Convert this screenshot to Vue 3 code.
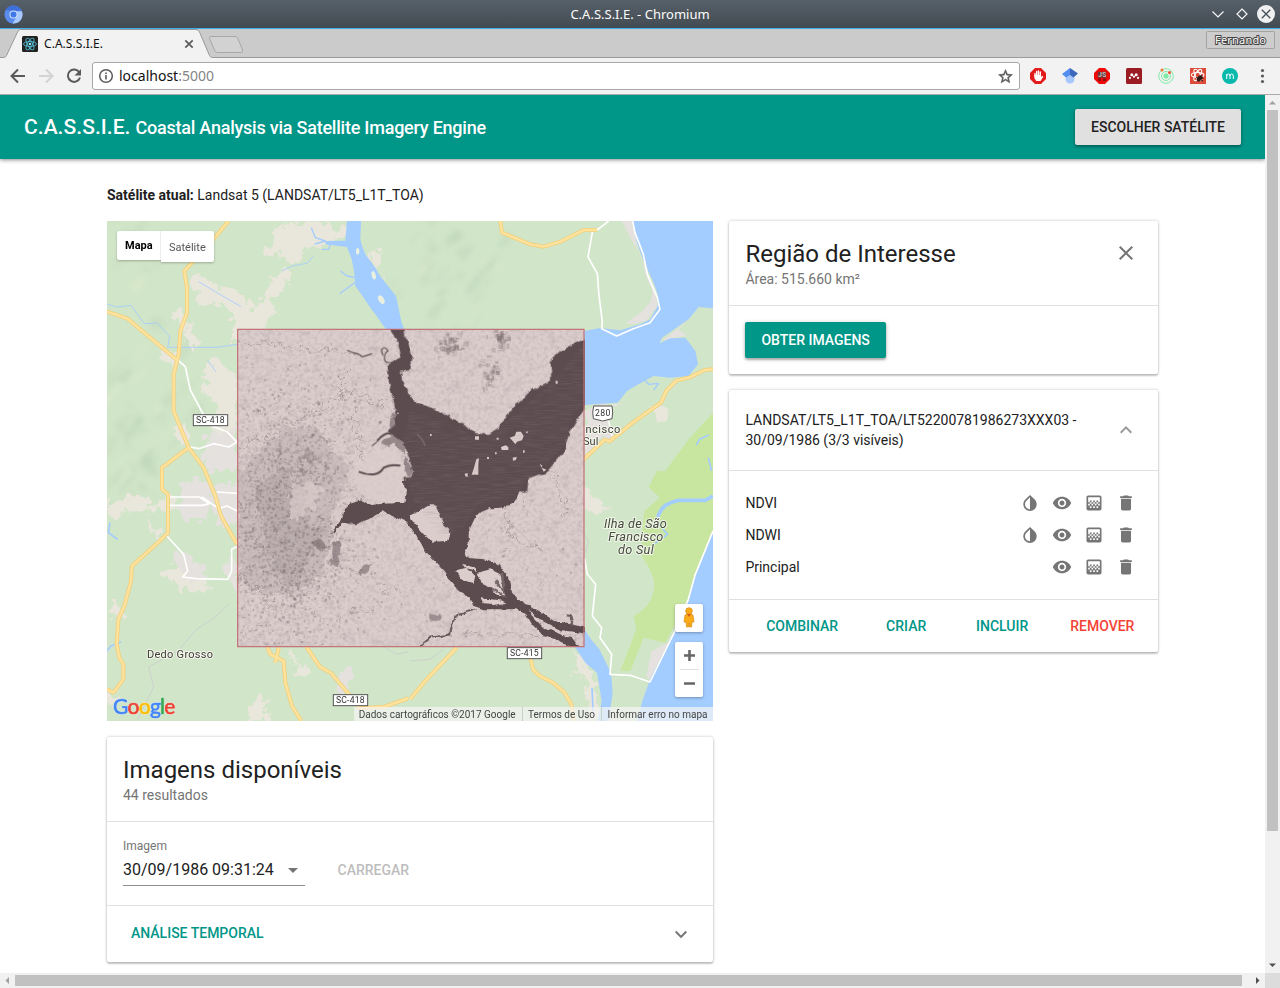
<script setup>
const layers = [
  { name: 'NDVI', invert: true },
  { name: 'NDWI', invert: true },
  { name: 'Principal', invert: false },
]

// Small deterministic generator, so that the terrain grain is always the same.
let seed = 4211
const rnd = () => {
  seed = (seed * 1664525 + 1013904223) % 4294967296
  return seed / 4294967296
}
const scatter = (n, cx, cy, sx, sy, max) =>
  Array.from({ length: n }, () => ({
    x: cx + (rnd() + rnd() + rnd() - 1.5) * sx,
    y: cy + (rnd() + rnd() + rnd() - 1.5) * sy,
    w: 2 + rnd() * max,
    h: 2 + rnd() * max,
    o: 0.1 + rnd() * 0.26,
  }))
const city = [
  ...scatter(1500, 520, 930, 200, 370, 7),
  ...scatter(500, 540, 900, 230, 280, 8),
  ...scatter(280, 600, 560, 260, 180, 7),
  ...scatter(330, 610, 1080, 260, 170, 7),
  ...scatter(130, 590, 720, 120, 100, 12),
  ...scatter(130, 1180, 1060, 280, 260, 6),
  ...scatter(70, 1025, 370, 38, 38, 16),
  ...scatter(45, 1175, 350, 26, 30, 15),
  ...scatter(55, 1145, 460, 26, 48, 14),
]
const hills = [
  ...scatter(75, 90, 590, 150, 260, 70),
  ...scatter(55, 1030, 170, 170, 180, 56),
  ...scatter(24, 70, 70, 130, 120, 70),
]
</script>

<template>
  <div class="window">
    <div class="titlebar">
      <svg class="app-logo" viewBox="0 0 20 20"><circle cx="10" cy="10" r="9.5" fill="#5b8def"/><path d="M1.5 5.5A9.5 9.5 0 0 1 18.5 6L10 6z" fill="#3f6fd8"/><path d="M18.8 6.5A9.5 9.5 0 0 1 9 19.5L13.7 11.5 13 6.5z" fill="#a9c8fb"/><circle cx="10" cy="10" r="4.3" fill="#cfe0fd"/><circle cx="10" cy="10" r="3.2" fill="#3f78e8"/></svg>
      <span>C.A.S.S.I.E. - Chromium</span>
      <svg class="win-buttons" viewBox="0 0 70 20" fill="none" stroke="#f4f6f7" stroke-width="1.2"><path d="M4.500 7.500l5.500 5.500L15.500 7.500M34 5l5 5-5 5-5-5z"/><circle cx="58" cy="10" r="9" fill="#eff0f1" stroke="none"/><path d="M53.800 5.800l8.500 8.500M62.300 5.800l-8.500 8.500" stroke="#475057" stroke-width="1.300"/></svg>
    </div>
    <div class="tabs">
      <svg viewBox="0 0 1280 30" width="1280" height="30">
        <path d="M0 28.500H3.500Q5.500 28.500 6.500 26.500L17.500 3Q18.500.5 20.500.5H196Q198.500.5 199.500 3L209.500 26.500Q210.500 28.500 212.500 28.500H1280V30H0z" fill="#f2f2f2" stroke="#999"/>
        <path d="M211 7.500H235Q237 7.500 237.700 9L242.600 21Q243.300 23.500 241 23.500H217.500Q215.500 23.500 214.700 21.500L209.500 9.500Q209 7.500 211 7.500z" fill="#d2d2d2" stroke="#a7a7a7"/>
        <rect x="22" y="7" width="16" height="16" rx="1.500" fill="#222"/>
        <g fill="none" stroke="#53b9d1" stroke-width=".9"><ellipse cx="30" cy="15" rx="6.500" ry="2.500"/><ellipse cx="30" cy="15" rx="6.500" ry="2.500" transform="rotate(60 30 15)"/><ellipse cx="30" cy="15" rx="6.500" ry="2.500" transform="rotate(120 30 15)"/></g><circle cx="30" cy="15" r="1.300" fill="#8fe3f5"/>
        <text x="44" y="19" class="tab-text" textLength="59">C.A.S.S.I.E.</text>
        <path d="M185.300 11.300l7.400 7.400M192.700 11.300l-7.400 7.400" stroke="#5a5a5a" stroke-width="1.700"/>
        <rect x="1206.500" y="2.500" width="68" height="17" rx="1" fill="#cdcdcd" stroke="#a3a3a3"/>
        <text x="1215" y="15" class="user-text" textLength="51">Fernando</text>
      </svg>
    </div>
    <div class="toolbar">
      <svg class="nav" viewBox="0 0 92 36"><g fill="none" stroke-width="2"><path d="M25 18H12M18 11.500L11.500 18l6.500 6.500" stroke="#5a5a5a"/><path d="M39 18H52M46 11.500l6.500 6.500-6.500 6.500" stroke="#d2d2d2"/><path d="M79.300 14.300A6.200 6.200 0 1 0 80 19.500" stroke="#5a5a5a"/></g><path d="M81 11v6.500h-6.500z" fill="#5a5a5a"/></svg>
      <div class="omnibox">
        <svg viewBox="0 0 16 16" width="16" height="16"><circle cx="8" cy="8" r="6.300" fill="none" stroke="#5a5a5a" stroke-width="1.500"/><path d="M7.200 7h1.600v4.500H7.200zM7.200 4.500h1.600V6H7.200z" fill="#5a5a5a"/></svg>
        <span class="url">localhost<em>:5000</em></span>
        <svg class="star" viewBox="0 0 24 24" width="17" height="17"><path fill="#5a5a5a" stroke="#5a5a5a" stroke-width=".6" d="M22 9.240l-7.190-.62L12 2 9.190 8.630 2 9.240l5.460 4.730L5.820 21 12 17.270 18.180 21l-1.630-7.030L22 9.240zM12 15.400l-3.760 2.270 1-4.280-3.320-2.880 4.380-.38L12 6.100l1.710 4.040 4.380.38-3.320 2.880 1 4.280L12 15.400z"/></svg>
      </div>
      <div class="extensions">
        <svg viewBox="0 0 16 16"><path d="M5 0h6l5 5v6l-5 5H5l-5-5V5z" fill="#e31b1b"/><path d="M5 8V5.500M6.700 7.500V3.500M8.500 7V3M10.300 8V4" stroke="#fff" stroke-width="1.400" stroke-linecap="round"/><path d="M4.300 7h6.800v2l1.200-1.200 1 .9-2.800 4.300H6.200L4.300 10z" fill="#fff"/></svg>
        <svg viewBox="0 0 16 16"><circle cx="8" cy="11" r="4.500" fill="#a5c7fb"/><path d="M8 0L0 6l4 3.500L8 7z" fill="#538df0"/><path d="M8 0l8 5.500-4.500 4L8 7z" fill="#3c67bd"/></svg>
        <svg viewBox="0 0 16 16"><path d="M5 0h6l5 5v6l-5 5H5l-5-5V5z" fill="#f00808"/><rect x="3.800" y="3.800" width="8.400" height="6" fill="#6a3232"/><rect x="4" y="10.500" width="3" height="2.500" fill="#8c1111"/><rect x="9" y="10.500" width="3" height="2.500" fill="#8c1111"/><text x="4" y="9.300" font-size="7" font-weight="700" fill="#c9baba">JS</text></svg>
        <svg viewBox="0 0 16 16"><rect width="16" height="16" rx="1.500" fill="#9b1c22"/><g fill="#fff"><circle cx="5.800" cy="6.800" r="1.500"/><circle cx="10.200" cy="6.800" r="1.500"/><circle cx="8" cy="8.600" r="1.200"/><circle cx="3.900" cy="9.900" r="1.100"/><circle cx="12.100" cy="9.900" r="1.100"/></g></svg>
        <svg viewBox="0 0 16 16" fill="none" stroke="#7eeaa5"><circle cx="8" cy="8" r="7.300"/><circle cx="8" cy="8" r="4.500"/><circle cx="8" cy="8" r="2.200" fill="#7eeaa5"/><circle cx="4" cy="2" r="1.500" fill="#f4762f" stroke="none"/><circle cx="11.500" cy="4.500" r="1.500" fill="#f04d32" stroke="none"/></svg>
        <svg viewBox="0 0 16 16"><rect width="16" height="16" fill="#dd4b39"/><g fill="none" stroke="#fff" stroke-width="1.100"><ellipse cx="7.700" cy="7" rx="6.300" ry="2.500"/><ellipse cx="7.700" cy="7" rx="6.300" ry="2.500" transform="rotate(60 7.700 7)"/><ellipse cx="7.700" cy="7" rx="6.300" ry="2.500" transform="rotate(120 7.700 7)"/></g><ellipse cx="9.500" cy="10.500" rx="2.300" ry="3.300" transform="rotate(35 9.500 10.500)" fill="#2d1714"/><path d="M6 9l7 4M8 13l4-5M11 7l2 4" stroke="#2d1714"/></svg>
        <svg viewBox="0 0 16 16"><circle cx="8" cy="8" r="8" fill="#08b9ac"/><path d="M4.700 11V6.200M4.700 8Q4.700 6 6.400 6T8 8v3M8 8Q8 6 9.700 6t1.600 2v3" stroke="#fff" fill="none"/></svg>
        <svg viewBox="0 0 16 16" fill="#5a5a5a"><circle cx="8.500" cy="2.500" r="1.600"/><circle cx="8.500" cy="8" r="1.600"/><circle cx="8.500" cy="13.500" r="1.600"/></svg>
      </div>
    </div>

    <div class="viewport">
      <div class="page">
        <header class="app-bar">
          <h1><span class="brand">C.A.S.S.I.E.</span> <span class="tagline">Coastal Analysis via Satellite Imagery Engine</span></h1>
          <button class="btn raised grey">ESCOLHER SATÉLITE</button>
        </header>
        <main>
          <p class="current"><b>Satélite atual:</b> Landsat 5 (LANDSAT/LT5_L1T_TOA)</p>
          <div class="columns">
            <div class="col-left">
              <section class="map">
                <svg class="map-canvas" viewBox="0 0 1818 1500">
                  <defs>
                    <clipPath id="scene"><rect x="391" y="324" width="1041" height="953"/></clipPath>
                    <filter id="grain" x="0" y="0" width="100%" height="100%">
                      <feTurbulence type="fractalNoise" baseFrequency=".09" numOctaves="4" seed="8"/>
                      <feColorMatrix values="0 0 0 0 .42  0 0 0 0 .36  0 0 0 0 .37  1.500 0 0 0 -.62"/>
                    </filter>
                    <filter id="patches" x="0" y="0" width="100%" height="100%">
                      <feTurbulence type="fractalNoise" baseFrequency=".028 .035" numOctaves="4" seed="21"/>
                      <feColorMatrix values="0 0 0 0 .45  0 0 0 0 .39  0 0 0 0 .4  4 0 0 0 -2.250"/>
                    </filter>
                    <filter id="swell" x="0" y="0" width="100%" height="100%">
                      <feTurbulence type="fractalNoise" baseFrequency=".02 .25" numOctaves="2" seed="3"/>
                      <feColorMatrix values="0 0 0 0 .25  0 0 0 0 .2  0 0 0 0 .22  1 0 0 0 -.38"/>
                      <feComposite in2="SourceGraphic" operator="in"/>
                    </filter>
                    <filter id="shore" x="-5%" y="-5%" width="110%" height="110%" color-interpolation-filters="sRGB">
                      <feTurbulence type="fractalNoise" baseFrequency=".05" numOctaves="3" seed="5" result="n"/>
                      <feDisplacementMap in="SourceGraphic" in2="n" scale="14" xChannelSelector="R" yChannelSelector="G"/>
                    </filter>
                    <filter id="ragged" x="-5%" y="-5%" width="110%" height="110%" color-interpolation-filters="sRGB">
                      <feTurbulence type="fractalNoise" baseFrequency=".04" numOctaves="3" seed="9" result="n"/>
                      <feDisplacementMap in="SourceGraphic" in2="n" scale="55" xChannelSelector="R" yChannelSelector="G"/>
                    </filter>
                    <filter id="relief" x="-10%" y="-10%" width="120%" height="120%"><feGaussianBlur stdDeviation="6"/></filter>
                  </defs>
                  <rect width="1818" height="1500" fill="#d1e5c8"/>
                  <g filter="url(#relief)"><ellipse v-for="(h, i) in hills" :key="i" :cx="h.x" :cy="h.y" :rx="h.w / 1.6" :ry="h.h / 3.5" :transform="`rotate(-50 ${h.x} ${h.y})`" :fill="i % 3 ? '#b9d0b3' : '#e2eccf'" :opacity="h.o"/></g>
                  <!-- inhabited lowlands -->
                  <g fill="#e9e6db" filter="url(#ragged)">
                    <path d="M500 20l60-18h80l25 18 70 10 15 25-70-5-45 30-45 5-5 35-45 10-10-25-40-5-30 5 10-30 35 0zM250 175l30-15 35 25 70 20 50 45-5 45-40-10-45-40-65 20-10-30zM375 265l80-5 25-50 10-45 45-20 25 15-35 45-35 45 35 20-30 10-10 45-40 25-70 15v-50zM190 275l35-10 20 40 15 20 15 45-30 15-15-60-20-15zM165 375l30 20 20 15-15 45-25-35zM290 430l30-15 40 25 31 25v210l-45-20-35-45 30-60-55-45 10-30-20-20zM200 620l25-10 25 45-20 20zM795 85l25 5 5 30-15 25-20-20 8-20zM820 150l20 60 15 45-12 5-25-60z"/>
                    <path d="M0 850l70-30 60 10-10 25 60-10v-25l30 15v30l-30 5-80-5-60 10-30 25zM115 900l15-5 5 25 35 15-10 25-15-5-15-30zM150 1050l30-5 50-30 30 10 30 30 20 50-80 5-25-25zM15 1140l25 5 15 25-5 20-35-10zM550 1285l20 40 40 10-10 30-30-10-10-25-20-20zM430 1450l30-20 20 5-10 40 20 10-20 15h-50zM0 1405l20 10 5 40-25-10z"/>
                    <path d="M1432 800l15 20 30 20 20 25-20 15-30-15-15 5zM1645 1305h35l-15 20-20-10zM1410 1285l40 60 20 40-10 40 20 50-20 25-20-40 5-70-45-35z"/>
                  </g>
                  <g fill="#e4e1df" filter="url(#ragged)">
                    <path d="M215 785l60-10 45 20-5 60-30 45-65-10-10-30 15-20zM295 650l96-30v130H295zM325 790h66v110l-45 20-25-50zM200 995l30-5 45 50 25 20-15 25-55-10zM345 1040l45-25v90l-25-20zM685 1375l40-40 15 15-10 45-35 20z"/>
                    <path d="M1432 565l50-10 55-5 30 0-50 15-10 30 20 45-65 45-30 30z"/>
                  </g>
                  <g fill="#e4e1df">
                    <path d="M1545 0h35l10 80 50 120 12 55-35 45-40 10-20-5 50-35 25-30 5-30-20-45-15-60-35-60z"/>
                    <path d="M1618 1365l15-75 55-28-55 120zM1665 360L1740 300 1715 325 1740 345 1700 350z"/>
                    <path d="M1650 555l20 0 15 10-5 35-30 5-5-30-20-20z" fill="#e9e6db"/>
                  </g>
                  <!-- nature reserve -->
                  <path d="M1818 575L1745 655 1675 750H1650L1625 798 1658 830 1612 870Q1600 960 1607 1010 1650 1070 1640 1110 1630 1160 1580 1185L1588 1225 1540 1350 1570 1350 1610 1250 1675 1265 1744 1135 1765 1060 1818 940z" fill="#c8e6a0"/>
                  <!-- sea and rivers -->
                  <g fill="#a3ccff">
                    <path d="M1575 0L1590 65 1610 120 1640 185 1652 220 1652 255 1630 295 1600 310 1540 328 1480 321 1432 330V552L1532 545 1560 510 1590 492 1640 465 1690 470 1745 465 1773 430 1765 390 1735 350 1690 352 1658 367 1665 350 1745 295 1775 258 1818 262V0z"/>
                    <path d="M1818 930L1765 1060 1744 1135 1704 1230 1631 1370 1606 1440 1590 1500H1818zM720 0h42l-2 55 12 50 95 120 20 95-50 5L745 195l-5-65-20-52-65-8v-10l60-1z"/>
                    <path d="M755 50L775 100 805 140 848 215 870 275 892 324H842L790 260 750 195 735 120z"/>
                    <path d="M1432 1225l20 30 25 30 35 70 5 60-12 85h-33l12-60-14-85-35-30-30-45z"/>
                  </g>
                  <g fill="#eaf0df"><ellipse cx="752" cy="91" rx="5" ry="10"/><ellipse cx="800" cy="163" rx="6" ry="13" transform="rotate(-15 800 163)"/><ellipse cx="823" cy="236" rx="8" ry="14" transform="rotate(-30 823 236)"/></g>
                  <g fill="none" stroke="#a3ccff" stroke-linejoin="round">
                    <path d="M613 20l12 30 30 10-32 9M670 65l-5 20h-20M700 150l20 15 25 5M750 180l-52 38M1610 475l15 15 30-3-15 20" stroke-width="4"/>
                    <path d="M1818 825L1795 838 1715 838Q1670 845 1655 880L1650 905" stroke-width="11"/>
                    <path d="M1652 895L1660 915 1682 940 1640 970M1768 672L1778 655 1805 642M1804 710l10 40M1455 1400l3 70M0 1290l12-15 30-12M9 905l-5 30 28 20" stroke-width="5"/>
                    <path d="M0 250l30 8 42-5 40 55 38-2 38 40-5 30M180 379h150l61-9M275 182l50 30 77 45M302 418l25 35M525 150l30-15 45-8 20-22" stroke-width="2.500"/>
                  </g>
                  <path d="M365 1150l-40 38-60 40-50 60-90 50 15 60-50 100M835 1280l35 20 35-8M909 1320l60-5 40-30M1432 940l12 20-8 35" fill="none" stroke="#c9ccd0" stroke-width="2.500"/>
                  <!-- local roads -->
                  <path d="M210 415l25 22 15 70 40 75 30 35 40 15 31 32M250 678l25 5 45-15 45 10 26-15M187 828h90l30 20-20 5H187M285 828l50 35 25-8 31 15M330 813l60 4M180 945l50 55 12 50-15 18 40 5 95 2 12-25v-65l15-8M1505 0l-32 25-15-2-15 85 28 50 5 65 10 80-2 20 45 22 50-22 50-18 30-40-8-35-30-70-12-60-25-65-8-40M1432 1010l9 50 25 30-10 95 28 35-5 30 35 50-5 60 60 3 60 20L1704 1230 1744 1135 1765 1060 1818 930M1505 600l10 45" fill="none" stroke="#fff" stroke-width="5" stroke-linejoin="round"/>
                  <!-- highways -->
                  <g fill="none" stroke-linejoin="round">
                    <path d="M365 0L325 48 232 150 240 200 240 275 220 330 215 400 200 460 200 570 245 680 165 740V805l18 15v115l-25 25-83 75-3 45-20 75-18 40-5 75 8 40 12 20v45l-30 40L0 1405M0 272l60 20 150 125M245 680l45 60 35 85 17 60 48 85M480 1275l10 25 40 20 5 65 20 70 28 45M515 1280l-10 45M598 1277l40 60 35 20 50 60 35 45 75-5 70-25M1180 0l5 35 85 35 40 7 50-15 70-35h40M1818 445l-25 2-45 22-40 10-30 30-15 35-85 60-70 57-15-5-75 70M909 1435l50-60 90-95M1268 1300l10 45 20 20 40 20 35 30 20 35 8 50" stroke="#f2cf79" stroke-width="12"/>
                    <path d="M365 0L325 48 232 150 240 200 240 275 220 330 215 400 200 460 200 570 245 680 165 740V805l18 15v115l-25 25-83 75-3 45-20 75-18 40-5 75 8 40 12 20v45l-30 40L0 1405M0 272l60 20 150 125M245 680l45 60 35 85 17 60 48 85M480 1275l10 25 40 20 5 65 20 70 28 45M515 1280l-10 45M598 1277l40 60 35 20 50 60 35 45 75-5 70-25M1180 0l5 35 85 35 40 7 50-15 70-35h40M1818 445l-25 2-45 22-40 10-30 30-15 35-85 60-70 57-15-5-75 70M909 1435l50-60 90-95M1268 1300l10 45 20 20 40 20 35 30 20 35 8 50" stroke="#fee39f" stroke-width="7"/>
                  </g>
                  <g class="place"><text x="120" y="1310" textLength="198">Dedo Grosso</text><text x="1416" y="636" textLength="124">ancisco</text><text x="1428" y="672" textLength="46">Sul</text></g>
                  <g class="island"><text x="1491" y="921" textLength="188">Ilha de São</text><text x="1504" y="959" textLength="165">Francisco</text><text x="1533" y="998" textLength="107">do Sul</text></g>

                  <!-- satellite scene -->
                  <g clip-path="url(#scene)">
                    <rect x="391" y="324" width="1041" height="953" fill="#dccdcd"/>
                    <path d="M391 750l80-70 60-60 100 0 40 60 60 60-30 80-40 100-50 90-40 90-70 20-110-40z" fill="#a89a9c" opacity=".32" filter="url(#ragged)"/>
                    <path d="M440 800l90-60 50 60 40 120 60 0-30 130-70 60-80-60z" fill="#978a8d" opacity=".25" filter="url(#ragged)"/>
                    <rect x="391" y="324" width="1041" height="953" filter="url(#patches)" opacity=".3"/>
                    <g fill="#6c5e61"><rect v-for="(b, i) in city" :key="i" :x="b.x" :y="b.y" :width="b.w" :height="b.h" :opacity="b.o"/></g>
                    <rect x="391" y="324" width="1041" height="953" filter="url(#grain)" opacity=".6"/>
                    <path d="M545 860l20-70 35-5 50 20-20 50-40 20-30 40zM740 720l60-40 80 5 20 120-20 40-60 5-80-50z" fill="#ddcece" opacity=".65" filter="url(#ragged)"/>
                    <g fill="none" stroke="#85777a" stroke-width="2.500" opacity=".6" filter="url(#ragged)"><path d="M391 365l80-3 70 20 110 2 100 12M400 680l110-45 50-35 70-30 90-60M680 500l60 40M740 440l-40 30 10 40 70 10 20 35 50-10M391 1060l90 60 30 80M740 560l10 60 5 60 20 50M1060 1237l370 5M740 1175l60-10 30-50 40-15M1180 840l30 90 30 30 60 30M1330 750l30 60 20 70"/></g>
                    <!-- shaded flats along the bay -->
                    <g fill="#75666a" filter="url(#shore)">
                      <path d="M872 680L846 640 850 600 865 560 900 650 890 700zM822 665Q850 635 870 655L850 675 830 670zM895 705L918 750 905 775 890 730z" opacity=".65"/>
                      <path d="M710 860L742 880 738 912 712 905zM612 965q20-20 38-5l12 20-25 8zM678 965l18-8 5 30-10 50-18-8zM755 1055l15-20 22-3-8 18-25 15zM970 1180h30v20h-30z" opacity=".6"/>
                    </g>
                    <g filter="url(#shore)">
                      <g transform="translate(720 300)" fill="#5c4c50">
                        <path d="M119 10L150 60 160 95 155 112 135 122 122 132 125 180 140 240 145 262 145 310 125 330 165 360 182 400 198 450 192 468 172 470 185 515H540L545 475 600 455 630 420 650 395 665 340 690 300 720 250V50L690 65 660 80 625 100 612 120 612 175 595 190 555 205 520 240 480 280 455 320 420 342 385 335 330 300 280 270 225 250 195 235 165 180 162 152 190 148 197 110 185 60 175 50 172 10z"/>
                      </g>
                      <g transform="translate(660 780)">
                        <path d="M225 0L240 30 235 65 170 68 130 72 105 58 75 65 50 88 40 120 12 158 20 156 48 125 85 130 125 115 170 88 195 105 240 122 265 160 300 215 350 270 370 300 395 330 430 350 440 375 470 385 570 385 595 395 615 430 650 465 690 475 740 510H765L735 470 700 460 650 440 620 410 605 390 650 420 700 447 780 458V440L735 430 690 425 640 395 580 360 555 335 550 300 520 255 470 235 430 232 412 222 425 190 425 150 450 98 490 82 520 80 560 68 575 30 605 0z" fill="#5c4c50"/>
                        <path d="M245 103L270 95 310 70 325 70 345 115 370 160 360 180 315 182 290 160 260 125zM385 268L420 260 445 285 440 305 410 300zM452 275L490 265 520 280 530 320 535 345 510 345 490 320 465 308zM402 248L440 258 450 270 410 258zM460 352L520 358 535 365 500 372 470 370z" fill="#dccdcd"/>
                        <path d="M505 300L530 330 525 275M490 320L540 350" fill="none" stroke="#75666a" stroke-width="7"/>
                        <path d="M445 385L385 405 375 430 370 460 310 470 280 495M740 435L730 405 718 403" fill="none" stroke="#6a5a5e" stroke-width="6"/>
                      </g>
                    </g>
                    <g transform="translate(720 300)" fill="none" stroke="#5c4c50">
                      <path d="M35 452Q60 462 80 460T110 440Q130 428 160 434M90 360Q110 335 130 336T155 350" stroke-width="6"/>
                      <path d="M135 124Q112 128 112 112T123 90Q112 72 103 88L108 104M90 362L75 375M0 88Q20 96 30 98T45 108L75 98" stroke-width="3.500"/>
                      <path d="M210 340Q225 350 235 375" stroke="#857578" stroke-width="5" opacity=".6"/>
                    </g>
                    <g transform="translate(720 300)" fill="#dccdcd">
                      <path d="M488 350L503 345 508 332 522 332 530 345 525 358 510 362 505 370 497 360zM462 378l14-5 8 5 0 9-20 0zM384 346h12v10h-12zM388 415l8-4-2 20 0 30-20 0 6-18zM353 458l9-2v12l-7-2zM497 410l12-3-2 10-9 2zM626 179h6v9h-6z"/>
                      <path d="M535 333l9-2-3 6zM449 350h6v6h-6zM528 388h5v7h-5zM420 408h6v6h-6zM444 394h5v6h-5zM249 339h5v6h-5zM578 428l8 6-2 6zM584 440l14 6-8 6zM152 272l4 6-5 2z"/>
                    </g>
                    <path d="M880 690L909 570 1010 600 1130 660 1200 600 1330 490 1432 370V540L1390 600 1370 680 1300 740 1220 830 1110 850 1070 920 1000 950 920 840z" filter="url(#swell)" opacity=".5"/>
                  </g>
                  <rect x="392" y="325" width="1039" height="952" fill="none" stroke="#c26e74" stroke-width="3.500"/>

                  <g class="shield"><rect x="259" y="581" width="103" height="33"/><text x="267" y="606" textLength="86">SC-418</text><rect x="679" y="1421" width="103" height="33"/><text x="687" y="1446" textLength="86">SC-418</text><rect x="1201" y="1280" width="103" height="33"/><text x="1209" y="1305" textLength="86">SC-415</text><path d="M1460 555h55q4 18 0 38l-28 7-28-7q-4-20 1-38z"/><text x="1464" y="585" textLength="46">280</text></g>
                  <text class="google" x="18" y="1479" textLength="187"><tspan fill="#4285f4" stroke="#4285f4">G</tspan><tspan fill="#ea4335" stroke="#ea4335">o</tspan><tspan fill="#fbbc05" stroke="#fbbc05">o</tspan><tspan fill="#4285f4" stroke="#4285f4">g</tspan><tspan fill="#34a853" stroke="#34a853">l</tspan><tspan fill="#ea4335" stroke="#ea4335">e</tspan></text>
                </svg>
                <div class="map-types"><span class="on">Mapa</span><span>Satélite</span></div>
                <div class="map-tools">
                  <div class="tool"><svg viewBox="0 0 28 28"><g fill="#fbab18" stroke="#d98a12" stroke-width=".7"><path d="M10 11q4-2 8 0l1 7h-2l-.5 5h-2l-.5-4-.5 4h-2L11 18H9z"/><circle cx="14" cy="7" r="3.300"/></g><path d="M12 10l2 3 2-3z" fill="#d55d20"/></svg></div>
                  <div class="tool zoomer"><svg viewBox="0 0 28 55"><path d="M9 13.500h11M14.500 8v11M9 41.500h11" stroke="#666" stroke-width="2.600"/><path d="M5 27.500h19" stroke="#e2e2e2"/></svg></div>
                </div>
                <div class="attribution"><span>Dados cartográficos ©2017 Google</span><span>Termos de Uso</span><span>Informar erro no mapa</span></div>
              </section>

              <section class="card images">
                <div class="head"><div><h2>Imagens disponíveis</h2><p>44 resultados</p></div></div>
                <div class="picker">
                  <div class="field"><label>Imagem</label><div class="select"><span>30/09/1986 09:31:24</span><svg viewBox="0 0 24 24" width="24" height="24"><path d="M7 10l5 5 5-5z" fill="#757575"/></svg></div></div>
                  <button class="btn disabled">CARREGAR</button>
                </div>
                <div class="temporal"><button class="btn flat">ANÁLISE TEMPORAL</button><svg viewBox="0 0 24 24" width="24" height="24"><path d="M7.410 7.840L12 12.420l4.590-4.580L18 9.250l-6 6-6-6z" fill="#757575"/></svg></div>
              </section>
            </div>

            <div class="col-right">
              <section class="card">
                <div class="head"><div><h2>Região de Interesse</h2><p>Área: 515.660 km²</p></div><svg viewBox="0 0 24 24" width="24" height="24"><path d="M19 6.410L17.590 5 12 10.590 6.410 5 5 6.410 10.590 12 5 17.590 6.410 19 12 13.410 17.590 19 19 17.590 13.410 12z" fill="#757575"/></svg></div>
                <div class="region-action"><button class="btn raised teal">OBTER IMAGENS</button></div>
              </section>
              <section class="card">
                <div class="scene-head"><span>LANDSAT/LT5_L1T_TOA/LT52200781986273XXX03 -<br>30/09/1986 (3/3 visíveis)</span><svg viewBox="0 0 24 24" width="24" height="24"><path d="M12 8l-6 6 1.410 1.410L12 10.830l4.590 4.580L18 14z" fill="#999"/></svg></div>
                <div class="layers">
                  <div v-for="layer in layers" :key="layer.name" class="layer">
                    <span>{{ layer.name }}</span>
                    <svg v-if="layer.invert" viewBox="0 0 24 24"><path d="M17.660 7.930L12 2.270 6.340 7.930c-3.120 3.120-3.120 8.190 0 11.310C7.900 20.800 9.950 21.580 12 21.580s4.100-.78 5.660-2.340c3.120-3.120 3.120-8.190 0-11.310zM12 19.590c-1.600 0-3.110-.62-4.240-1.760C6.620 16.690 6 15.190 6 13.590s.62-3.110 1.760-4.240L12 5.100v14.490z"/></svg>
                    <svg viewBox="0 0 24 24"><path d="M12 4.500C7 4.500 2.730 7.610 1 12c1.730 4.390 6 7.500 11 7.500s9.270-3.110 11-7.500c-1.730-4.390-6-7.500-11-7.500zM12 17c-2.760 0-5-2.240-5-5s2.240-5 5-5 5 2.240 5 5-2.240 5-5 5zm0-8c-1.660 0-3 1.340-3 3s1.340 3 3 3 3-1.340 3-3-1.340-3-3-3z"/></svg>
                    <svg viewBox="0 0 24 24"><path d="M11 9h2v2h-2zm-2 2h2v2H9zm4 0h2v2h-2zm2-2h2v2h-2zM7 9h2v2H7zm12-6H5c-1.100 0-2 .9-2 2v14c0 1.100.9 2 2 2h14c1.100 0 2-.9 2-2V5c0-1.100-.9-2-2-2zM9 18H7v-2h2v2zm4 0h-2v-2h2v2zm4 0h-2v-2h2v2zm2-7h-2v2h2v2h-2v-2h-2v2h-2v-2h-2v2H9v-2H7v2H5v-2h2v-2H5V5h14v6z"/></svg>
                    <svg viewBox="0 0 24 24"><path d="M6 19c0 1.100.9 2 2 2h8c1.100 0 2-.9 2-2V7H6v12zM19 4h-3.500l-1-1h-5l-1 1H5v2h14V4z"/></svg>
                  </div>
                </div>
                <div class="actions"><button class="btn flat">COMBINAR</button><button class="btn flat">CRIAR</button><button class="btn flat">INCLUIR</button><button class="btn flat red">REMOVER</button></div>
              </section>
            </div>
          </div>
        </main>
      </div>
      <div class="vscroll"><svg viewBox="0 0 15 15"><path d="M4 9.500h7L7.500 6z" fill="#a0a0a0"/></svg><i></i><svg viewBox="0 0 15 15"><path d="M4 5.500h7L7.500 9z" fill="#505050"/></svg></div>
    </div>
    <div class="hscroll"><svg viewBox="0 0 15 15"><path d="M9 4v7L5.500 7.500z" fill="#a0a0a0"/></svg><i></i><svg viewBox="0 0 15 15"><path d="M6 4v7l3.500-3.500z" fill="#505050"/></svg><b></b></div>
  </div>
</template>

<style>
body { margin: 0; overflow: hidden; }
</style>
<style scoped>
* { box-sizing: border-box; }
svg { display: block; flex: none; }
.window { width: 1280px; height: 988px; display: flex; flex-direction: column; background: #fff; font-family: Roboto, sans-serif; color: #212121; overflow: hidden; }
.titlebar { height: 29px; flex: none; display: grid; grid-template-columns: 70px 1fr 70px; align-items: center; border-bottom: 1px solid #3daee9; background: linear-gradient(#566069, #434b52); color: #fcfcfc; font: 13px "Noto Sans", sans-serif; text-align: center; }
.app-logo { width: 19px; height: 19px; margin-left: 4px; }
.win-buttons { width: 70px; height: 20px; margin-left: -2px; }
.tabs { height: 29px; flex: none; background: #cbcbcb; overflow: hidden; }
.tab-text { font: 12px "Noto Sans", sans-serif; fill: #111; }
.user-text { font: 11px "Noto Sans", sans-serif; fill: #fff; stroke: #444; stroke-width: 2px; paint-order: stroke; }
.toolbar { height: 37px; flex: none; display: flex; align-items: center; background: #f2f2f2; border-bottom: 1px solid #aaa; }
.nav { width: 92px; height: 36px; }
.omnibox { width: 928px; height: 28px; border: 1px solid #a8a8a8; border-radius: 3px; background: #fff; display: flex; align-items: center; padding: 0 5px; gap: 5px; font: 14px "Noto Sans", sans-serif; color: #111; }
.url { padding-bottom: 2px; }
.omnibox em { font-style: normal; color: #858585; }
.star { margin-left: auto; }
.extensions { display: flex; gap: 16px; margin-left: 10px; }
.extensions svg { width: 16px; height: 16px; }
.viewport { flex: 1; min-height: 0; display: flex; }
.page { width: 1265px; overflow: hidden; }
.app-bar { height: 64px; display: flex; align-items: center; justify-content: space-between; padding: 0 24px; background: #009688; color: #fff; box-shadow: 0 1px 4px rgba(0,0,0,.45); }
h1, h2, p { margin: 0; font-weight: 400; }
h1 { font-weight: 500; white-space: nowrap; line-height: 32px; display: flex; align-items: baseline; gap: 5px; }
.brand { font-size: 21px; letter-spacing: .05px; }
.tagline { font-size: 18px; letter-spacing: -.23px; }
.btn { border: 0; background: transparent; border-radius: 2px; height: 36px; padding: 0 16px; font: 500 14px Roboto, sans-serif; color: inherit; white-space: nowrap; }
.raised { box-shadow: 0 2px 2px rgba(0,0,0,.2), 0 1px 4px rgba(0,0,0,.25); }
.grey { background: #e0e0e0; color: #212121; }
.teal { background: #009688; color: #fff; }
.flat { color: #009688; }
.red { color: #f44336; }
.disabled { color: #bdbdbd; }
main { padding: 26px 106px 0 107px; }
.current { font-size: 14px; line-height: 20px; }
.columns { display: flex; gap: 16.4px; margin-top: 16px; }
.col-left { width: 606px; flex: none; display: flex; flex-direction: column; gap: 16px; }
.col-right { width: 429px; flex: none; display: flex; flex-direction: column; gap: 16px; }
.map { position: relative; height: 500px; overflow: hidden; }
.map-canvas { width: 606px; height: 500px; }
.place { font: 33px Roboto, sans-serif; fill: #3d3d34; stroke: #f4f6ed; stroke-width: 6px; paint-order: stroke; }
.island { font: italic 38px Roboto, sans-serif; fill: #45493f; stroke: #f1f6e8; stroke-width: 6px; paint-order: stroke; }
.shield { font: 26px Roboto, sans-serif; fill: #333; }
.shield rect, .shield path { fill: #fff; stroke: #555; stroke-width: 3px; }
.google { font: 400 63px Lato, sans-serif; stroke-width: 2px; filter: drop-shadow(0 0 2px #fff) drop-shadow(0 0 2px #fff); }
.map-types { position: absolute; left: 10px; top: 10px; display: flex; align-items: flex-start; font-size: 11px; color: #565656; filter: drop-shadow(0 1px 1px rgba(0,0,0,.25)); }
.map-types span { background: #fff; padding: 10px 8px 8px; line-height: 13px; width: 53px; border-radius: 0 2px 2px 0; }
.map-types .on { color: #000; font-weight: 700; width: 44px; padding: 8px; border-radius: 2px 0 0 2px; border-right: 1px solid #eee; }
.map-tools { position: absolute; right: 10px; top: 383px; display: flex; flex-direction: column; gap: 10px; }
.tool { width: 28px; height: 28px; background: #fff; border-radius: 2px; box-shadow: 0 1px 3px rgba(0,0,0,.3); }
.zoomer { height: 55px; }
.attribution { position: absolute; right: 0; bottom: 0; height: 14px; display: flex; background: rgba(245,245,245,.72); font-size: 10px; line-height: 16px; color: #444; white-space: nowrap; }
.attribution span { padding: 0 6.4px 0 5px; }
.attribution span:last-child { padding-right: 5.5px; }
.attribution span + span { border-left: 1px solid #c8d2c4; }
.card { background: #fff; border-radius: 2px; box-shadow: 0 2px 2px rgba(0,0,0,.2), 0 0 3px rgba(0,0,0,.25); }
.head { height: 84px; padding: 16px 20px 0 16px; display: flex; justify-content: space-between; }
.head svg { margin-top: 4px; }
h2 { font-size: 24px; line-height: 34px; }
.head p { font-size: 14px; line-height: 20px; margin-top: -2px; color: #757575; }
.region-action { height: 69px; border-top: 1px solid #e0e0e0; padding: 16px; }
.picker { height: 85px; border-top: 1px solid #e0e0e0; border-bottom: 1px solid #e0e0e0; padding: 15px 16px; display: flex; gap: 16.5px; }
.field { width: 182px; height: 49px; border-bottom: 1px solid #8d8d8d; }
.field label { display: block; font-size: 12px; line-height: 18px; color: #757575; }
.select { display: flex; align-items: center; justify-content: space-between; height: 29px; font-size: 16px; }
.picker .btn { margin-top: 15px; }
.images { height: 225px; }
.temporal { height: 56px; padding: 9px 20px 0 8px; display: flex; justify-content: space-between; }
.temporal svg { margin-top: 8px; }
.scene-head { height: 80px; padding: 20px 20px 0 16px; display: flex; justify-content: space-between; font-size: 14px; line-height: 20px; }
.scene-head svg { margin-top: 8px; }
.layers { height: 130px; border-top: 1px solid #e0e0e0; border-bottom: 1px solid #e0e0e0; padding: 16px 22px 0 16px; }
.layer { height: 32px; display: flex; align-items: center; gap: 12px; font-size: 14px; }
.layer span { margin-right: auto; }
.layer svg { width: 20px; height: 20px; fill: #757575; }
.actions { height: 52px; display: flex; align-items: center; justify-content: flex-end; gap: 8px; padding: 0 8px; }
.actions .btn { min-width: 88px; }
.vscroll { width: 15px; display: flex; flex-direction: column; background: #f1f1f1; align-items: center; }
.vscroll svg, .hscroll svg { width: 15px; height: 15px; }
.vscroll i { width: 11px; height: 721px; background: #c1c1c1; margin-bottom: auto; }
.hscroll { height: 15px; flex: none; display: flex; align-items: center; background: #f1f1f1; }
.hscroll i { width: 1227px; height: 11px; background: #c1c1c1; }
.hscroll svg:nth-of-type(2) { margin-left: auto; }
.hscroll b { width: 15px; height: 15px; background: #dcdcdc; }
</style>
